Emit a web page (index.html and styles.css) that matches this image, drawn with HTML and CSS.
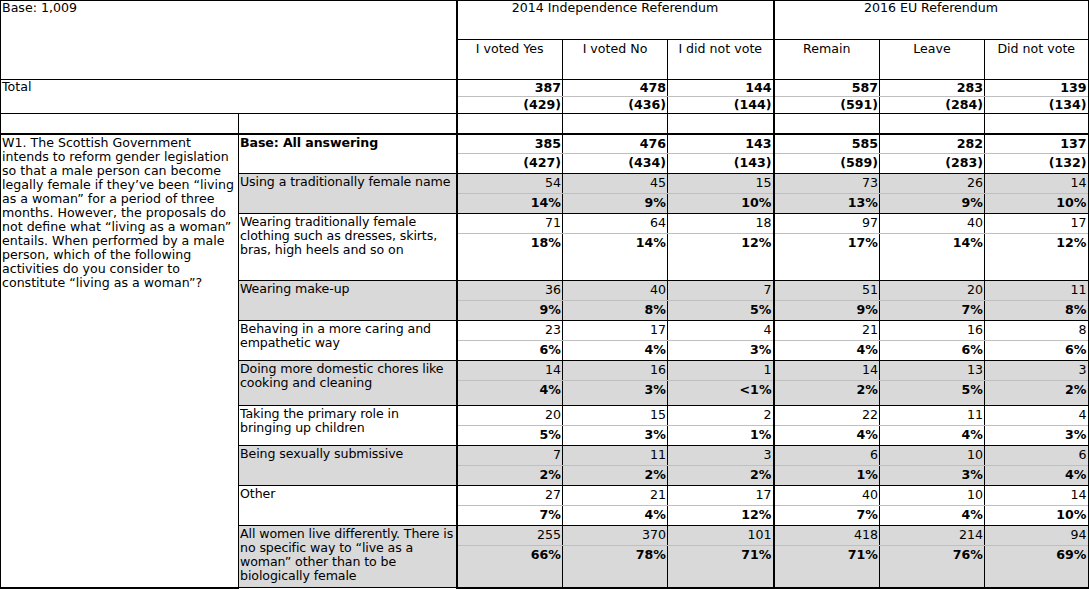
FILE: index.html
```html
<!DOCTYPE html>
<html>
<head>
<meta charset="utf-8">
<link rel="stylesheet" href="styles.css">
</head>
<body>
<table class="xt">
  <colgroup>
    <col class="w-q"><col class="w-l">
    <col class="w-d1"><col class="w-d2"><col class="w-d3">
    <col class="w-d4"><col class="w-d5"><col class="w-d6">
  </colgroup>
  <tr class="hd1">
    <td colspan="2" rowspan="2" class="base">Base: 1,009</td>
    <td colspan="3" class="grp g">2014 Independence Referendum</td>
    <td colspan="3" class="grp g last">2016 EU Referendum</td>
  </tr>
  <tr class="hd2">
    <td class="sub g">I voted Yes</td>
    <td class="sub">I voted No</td>
    <td class="sub">I did not vote</td>
    <td class="sub g">Remain</td>
    <td class="sub">Leave</td>
    <td class="sub last">Did not vote</td>
  </tr>
  <tr class="tot1">
    <td colspan="2" rowspan="2" class="total">Total</td>
    <td class="n b c g">387</td><td class="n b c">478</td><td class="n b c">144</td>
    <td class="n b c g">587</td><td class="n b c">283</td><td class="n b c last">139</td>
  </tr>
  <tr class="tot2">
    <td class="n b p g">(429)</td><td class="n b p">(436)</td><td class="n b p">(144)</td>
    <td class="n b p g">(591)</td><td class="n b p">(284)</td><td class="n b p last">(134)</td>
  </tr>
  <tr class="gap">
    <td></td><td></td>
    <td class="g"></td><td></td><td></td><td class="g"></td><td></td><td class="last"></td>
  </tr>

  <tr class="rc top">
    <td rowspan="20" class="q">W1. The Scottish Government intends to reform gender legislation so that a male person can become legally female if they’ve been “living as a woman” for a period of three months. However, the proposals do not define what “living as a woman” entails. When performed by a male person, which of the following activities do you consider to constitute “living as a woman”?</td>
    <td rowspan="2" class="lab b">Base: All answering</td>
    <td class="n b c g">385</td><td class="n b c">476</td><td class="n b c">143</td>
    <td class="n b c g">585</td><td class="n b c">282</td><td class="n b c last">137</td>
  </tr>
  <tr class="rp">
    <td class="n b p g">(427)</td><td class="n b p">(434)</td><td class="n b p">(143)</td>
    <td class="n b p g">(589)</td><td class="n b p">(283)</td><td class="n b p last">(132)</td>
  </tr>

  <tr class="rc shade">
    <td rowspan="2" class="lab">Using a traditionally female name</td>
    <td class="n c g">54</td><td class="n c">45</td><td class="n c">15</td>
    <td class="n c g">73</td><td class="n c">26</td><td class="n c last">14</td>
  </tr>
  <tr class="rp shade">
    <td class="n b p g">14%</td><td class="n b p">9%</td><td class="n b p">10%</td>
    <td class="n b p g">13%</td><td class="n b p">9%</td><td class="n b p last">10%</td>
  </tr>

  <tr class="rc">
    <td rowspan="2" class="lab">Wearing traditionally female clothing such as dresses, skirts, bras, high heels and so on</td>
    <td class="n c g">71</td><td class="n c">64</td><td class="n c">18</td>
    <td class="n c g">97</td><td class="n c">40</td><td class="n c last">17</td>
  </tr>
  <tr class="rp tall-a">
    <td class="n b p g">18%</td><td class="n b p">14%</td><td class="n b p">12%</td>
    <td class="n b p g">17%</td><td class="n b p">14%</td><td class="n b p last">12%</td>
  </tr>

  <tr class="rc shade">
    <td rowspan="2" class="lab">Wearing make-up</td>
    <td class="n c g">36</td><td class="n c">40</td><td class="n c">7</td>
    <td class="n c g">51</td><td class="n c">20</td><td class="n c last">11</td>
  </tr>
  <tr class="rp shade">
    <td class="n b p g">9%</td><td class="n b p">8%</td><td class="n b p">5%</td>
    <td class="n b p g">9%</td><td class="n b p">7%</td><td class="n b p last">8%</td>
  </tr>

  <tr class="rc">
    <td rowspan="2" class="lab">Behaving in a more caring and empathetic way</td>
    <td class="n c g">23</td><td class="n c">17</td><td class="n c">4</td>
    <td class="n c g">21</td><td class="n c">16</td><td class="n c last">8</td>
  </tr>
  <tr class="rp">
    <td class="n b p g">6%</td><td class="n b p">4%</td><td class="n b p">3%</td>
    <td class="n b p g">4%</td><td class="n b p">6%</td><td class="n b p last">6%</td>
  </tr>

  <tr class="rc shade">
    <td rowspan="2" class="lab">Doing more domestic chores like cooking and cleaning</td>
    <td class="n c g">14</td><td class="n c">16</td><td class="n c">1</td>
    <td class="n c g">14</td><td class="n c">13</td><td class="n c last">3</td>
  </tr>
  <tr class="rp shade tall-b">
    <td class="n b p g">4%</td><td class="n b p">3%</td><td class="n b p">&lt;1%</td>
    <td class="n b p g">2%</td><td class="n b p">5%</td><td class="n b p last">2%</td>
  </tr>

  <tr class="rc">
    <td rowspan="2" class="lab">Taking the primary role in<br>bringing up children</td>
    <td class="n c g">20</td><td class="n c">15</td><td class="n c">2</td>
    <td class="n c g">22</td><td class="n c">11</td><td class="n c last">4</td>
  </tr>
  <tr class="rp">
    <td class="n b p g">5%</td><td class="n b p">3%</td><td class="n b p">1%</td>
    <td class="n b p g">4%</td><td class="n b p">4%</td><td class="n b p last">3%</td>
  </tr>

  <tr class="rc shade">
    <td rowspan="2" class="lab">Being sexually submissive</td>
    <td class="n c g">7</td><td class="n c">11</td><td class="n c">3</td>
    <td class="n c g">6</td><td class="n c">10</td><td class="n c last">6</td>
  </tr>
  <tr class="rp shade">
    <td class="n b p g">2%</td><td class="n b p">2%</td><td class="n b p">2%</td>
    <td class="n b p g">1%</td><td class="n b p">3%</td><td class="n b p last">4%</td>
  </tr>

  <tr class="rc">
    <td rowspan="2" class="lab">Other</td>
    <td class="n c g">27</td><td class="n c">21</td><td class="n c">17</td>
    <td class="n c g">40</td><td class="n c">10</td><td class="n c last">14</td>
  </tr>
  <tr class="rp">
    <td class="n b p g">7%</td><td class="n b p">4%</td><td class="n b p">12%</td>
    <td class="n b p g">7%</td><td class="n b p">4%</td><td class="n b p last">10%</td>
  </tr>

  <tr class="rc shade">
    <td rowspan="2" class="lab">All women live differently. There is no specific way to “live as a woman” other than to be biologically female</td>
    <td class="n c g">255</td><td class="n c">370</td><td class="n c">101</td>
    <td class="n c g">418</td><td class="n c">214</td><td class="n c last">94</td>
  </tr>
  <tr class="rp shade tall-c bottom">
    <td class="n b p g">66%</td><td class="n b p">78%</td><td class="n b p">71%</td>
    <td class="n b p g">71%</td><td class="n b p">76%</td><td class="n b p last">69%</td>
  </tr>
</table>
</body>
</html>
```
FILE: styles.css
```css
html, body {
  margin: 0;
  padding: 0;
  background: #ffffff;
}

body {
  font-family: "DejaVu Sans", Verdana, sans-serif;
  font-size: 12.6px;
  color: #000000;
}

.xt {
  border-collapse: collapse;
  table-layout: fixed;
  width: 1088px;
}

.w-q { width: 238px; }
.w-l { width: 218px; }
.w-d1 { width: 106px; }
.w-d2 { width: 105px; }
.w-d3 { width: 106px; }
.w-d4 { width: 106px; }
.w-d5 { width: 105px; }
.w-d6 { width: 104px; }

.xt td {
  border: 1px solid #000000;
  padding: 0 1px;
  vertical-align: top;
  line-height: 14px;
  overflow: hidden;
}

.xt td.g { border-left: 2px solid #000000; }
.xt td.last { border-right: 2px solid #000000; }

.hd1 { height: 39px; }
.hd2 { height: 40px; }
.tot1, .tot2 { height: 17px; }
.gap { height: 20px; }
.rc, .rp { height: 20px; }
.tall-a { height: 47px; }
.tall-b { height: 25px; }
.tall-c { height: 42px; }

.base, .total, .q, .lab { text-align: left; }
.base { border-top: 2px solid #000000; }
.grp { text-align: center; padding-top: 1px; border-top: 2px solid #000000; }
.xt td.sub { text-align: center; padding-top: 2px; }

.xt td.q { padding-top: 1px; border-bottom: 2px solid #000000; }
.xt td.lab { padding-top: 1px; letter-spacing: -0.1px; }

.xt td.n { text-align: right; padding-top: 2px; }
.xt .tot1 td.n, .xt .tot2 td.n { padding-top: 1px; line-height: 13px; }
.b { font-weight: bold; }

.xt td.c { border-bottom: 1px solid #bfbfbf; }
.xt td.p { border-top: 1px solid #bfbfbf; }

.top td { border-top: 2px solid #000000; }
.xt .bottom td { border-bottom: 2px solid #000000; }
.xt tr:last-child td.lab { border-bottom: 2px solid #000000; }

.shade td.n, .shade td.lab { background: #d9d9d9; }
```
